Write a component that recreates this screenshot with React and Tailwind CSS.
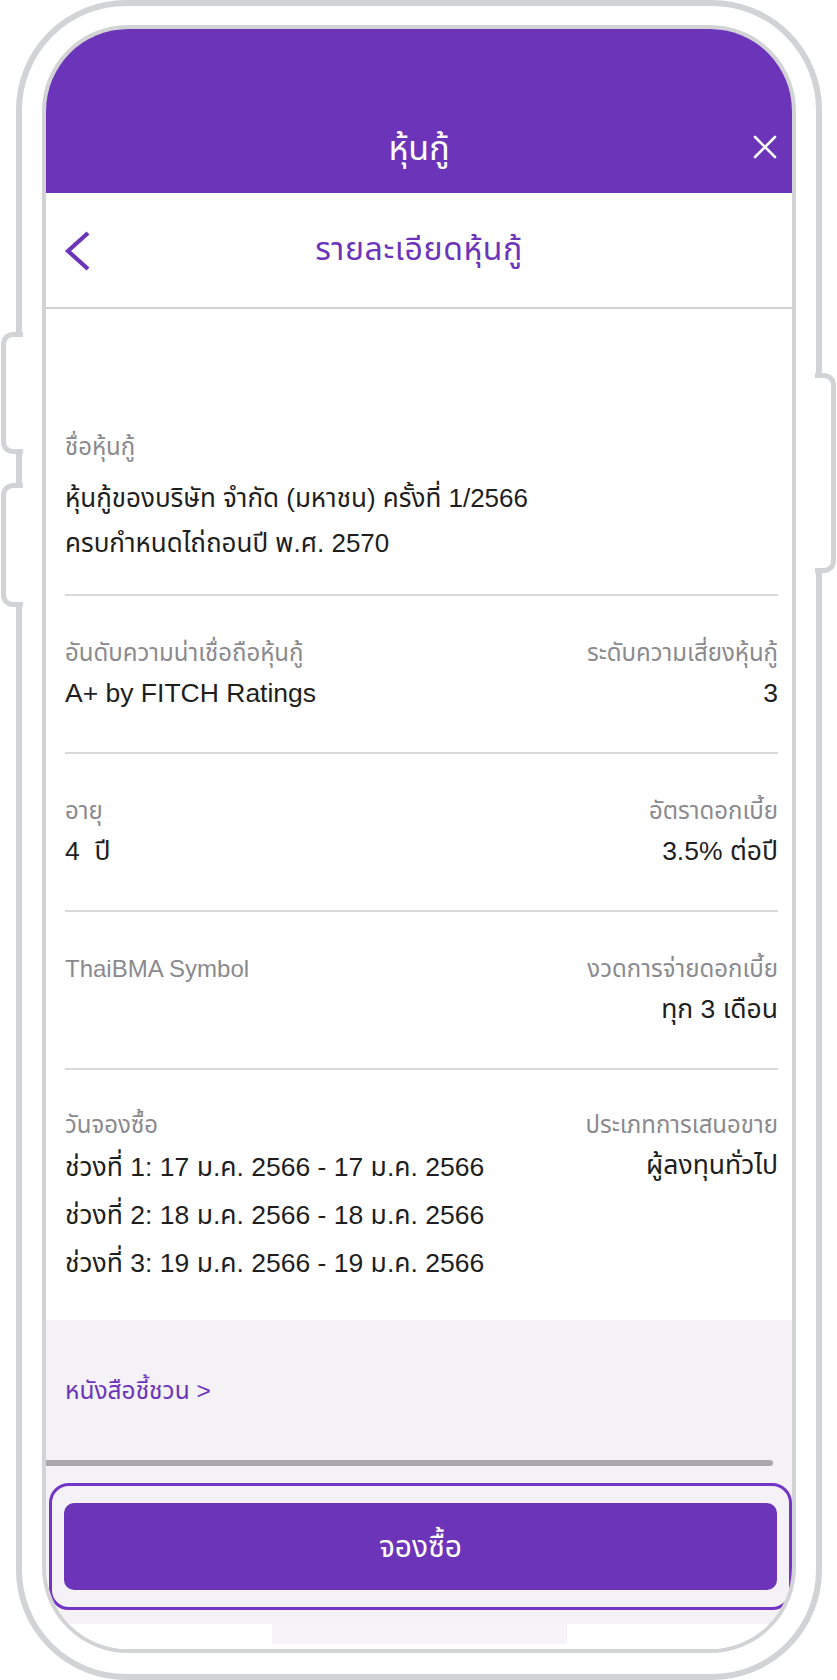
import React from "react";

const FONT = "font-['Liberation_Sans','Noto_Sans_Thai','Noto_Sans',sans-serif]";

function Row({ leftLabel, leftValue, rightLabel, rightValue }) {
  return (
    <div className="flex justify-between border-b-2 border-[#d9d9dd] pt-[42px] pb-[39px]">
      <div className="flex flex-col">
        <div className="h-[30px] leading-[30px] text-[24px] text-[#8a8a8e]">{leftLabel}</div>
        <div className="mt-[9px] h-[36px] leading-[32px] text-[26.5px] text-[#1e1e1e] whitespace-pre">{leftValue}</div>
      </div>
      <div className="flex flex-col items-end">
        <div className="h-[30px] leading-[30px] text-[24px] text-[#8a8a8e]">{rightLabel}</div>
        <div className="mt-[9px] h-[36px] leading-[32px] text-[26.5px] text-[#1e1e1e]">{rightValue}</div>
      </div>
    </div>
  );
}

export default function App() {
  return (
    <div className={`relative w-[837px] h-[1680px] bg-white ${FONT}`}>
      {/* outer phone frame */}
      <div className="absolute left-[16px] top-0 w-[806px] h-[1680px] rounded-[110px] border-[6px] border-[#d2d3d5] bg-white p-[20px] pt-[19px]">
        {/* inner screen */}
        <div className="flex h-[1628px] flex-col overflow-hidden rounded-[86px] border-[4px] border-[#d2d3d5] bg-white">
          {/* purple header */}
          <div className="relative flex h-[164px] shrink-0 items-end justify-center bg-[#6c35b9] pb-[22px]">
            <div className="h-[46px] leading-[46px] text-[34px] text-white">หุ้นกู้</div>
            <svg className="absolute right-[15px] bottom-[34px]" width="24" height="24" viewBox="0 0 24 24">
              <path d="M2 2 L22 22 M22 2 L2 22" stroke="white" strokeWidth="2.6" strokeLinecap="round" />
            </svg>
          </div>
          {/* sub header */}
          <div className="relative flex h-[116px] shrink-0 items-center justify-center border-b-2 border-[#cfcfd3] bg-white pb-[2px]">
            <svg className="absolute left-[17px] top-[37px]" width="28" height="42" viewBox="0 0 28 42">
              <polyline points="25,3 5,21 25,39" fill="none" stroke="#6c35b9" strokeWidth="4.2" strokeLinejoin="miter" />
            </svg>
            <div className="text-[32px] leading-[44px] tracking-[0.6px] text-[#6c35b9]">รายละเอียดหุ้นกู้</div>
          </div>
          {/* content */}
          <div className="flex shrink-0 flex-col bg-white pl-[19px] pr-[14px] h-[1011px]">
            <div className="border-b-2 border-[#d9d9dd] pt-[123px] pb-[28px]">
              <div className="h-[30px] leading-[30px] text-[24px] text-[#8a8a8e]">ชื่อหุ้นกู้</div>
              <div className="mt-[14px] leading-[45px] text-[26px] text-[#1e1e1e]">
                <div>หุ้นกู้ของบริษัท จำกัด (มหาชน) ครั้งที่ 1/2566</div>
                <div>ครบกำหนดไถ่ถอนปี พ.ศ. 2570</div>
              </div>
            </div>
            <Row leftLabel="อันดับความน่าเชื่อถือหุ้นกู้" leftValue="A+ by FITCH Ratings" rightLabel="ระดับความเสี่ยงหุ้นกู้" rightValue="3" />
            <Row leftLabel="อายุ" leftValue={"4  ปี"} rightLabel="อัตราดอกเบี้ย" rightValue="3.5% ต่อปี" />
            <Row leftLabel="ThaiBMA Symbol" leftValue="" rightLabel="งวดการจ่ายดอกเบี้ย" rightValue="ทุก 3 เดือน" />
            <div className="flex justify-between pt-[40px]">
              <div className="flex flex-col">
                <div className="h-[30px] leading-[30px] text-[24px] text-[#8a8a8e]">วันจองซื้อ</div>
                <div className="mt-[3px] leading-[48px] text-[26.5px] text-[#1e1e1e]">
                  <div>ช่วงที่ 1: 17 ม.ค. 2566 - 17 ม.ค. 2566</div>
                  <div>ช่วงที่ 2: 18 ม.ค. 2566 - 18 ม.ค. 2566</div>
                  <div>ช่วงที่ 3: 19 ม.ค. 2566 - 19 ม.ค. 2566</div>
                </div>
              </div>
              <div className="flex flex-col items-end">
                <div className="h-[30px] leading-[30px] text-[24px] text-[#8a8a8e]">ประเภทการเสนอขาย</div>
                <div className="mt-[1px] leading-[48px] text-[26.5px] text-[#1e1e1e]">ผู้ลงทุนทั่วไป</div>
              </div>
            </div>
          </div>
          {/* bottom grey area */}
          <div className="flex h-[304px] shrink-0 flex-col bg-[#f4f2f6]">
            <div className="mt-[55px] pl-[19px] h-[32px] leading-[32px] text-[24.5px] text-[#6c35b9]">หนังสือชี้ชวน &gt;</div>
            <div className="mt-[53px] mr-[19px] h-[6px] rounded-r-full bg-[#a9a9ab]" />
            <div className="mt-[17px] ml-[3px] rounded-[20px] border-[3px] border-[#7435c6] px-[12px] py-[17px]">
              <div className="flex h-[87px] items-center justify-center rounded-[10px] bg-[#6c35b9] text-[30px] text-white">
                จองซื้อ
              </div>
            </div>
          </div>
          <div className="flex flex-1 justify-center bg-white">
            <div className="h-[20px] w-[295px] bg-[#f6f4f8]" />
          </div>
        </div>
      </div>
      {/* side buttons */}
      <div className="absolute left-[1px] top-[332px] h-[122px] w-[22px] rounded-l-[12px] border-[5px] border-r-0 border-[#d2d3d5] bg-white" />
      <div className="absolute left-[1px] top-[483px] h-[124px] w-[22px] rounded-l-[12px] border-[5px] border-r-0 border-[#d2d3d5] bg-white" />
      <div className="absolute right-[1px] top-[373px] h-[200px] w-[21px] rounded-r-[12px] border-[5px] border-l-0 border-[#d2d3d5] bg-white" />
    </div>
  );
}
